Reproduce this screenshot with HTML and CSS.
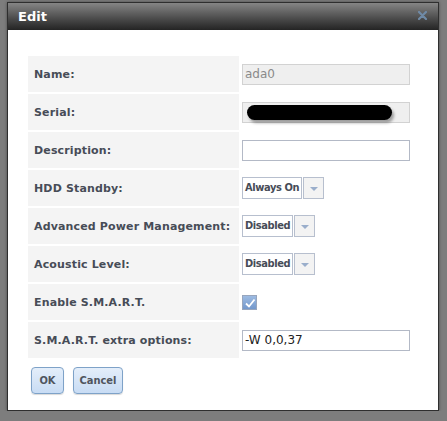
FILE: index.html
```html
<!DOCTYPE html>
<html>
<head lang="en">
    <meta charset="UTF-8">
    <title>Edit</title>
    <link rel="stylesheet" href="styles.css">
</head>
<body>
<div class="dialog">
    <div class="titlebar">
        <span class="title">Edit</span>
        <span class="close">
            <svg width="9" height="9" viewBox="0 0 9 9">
                <path d="M1 1 L8 8 M8 1 L1 8" stroke="#6f8aa6" stroke-width="2.2" stroke-linecap="round"/>
            </svg>
        </span>
    </div>
    <div class="content">
        <div class="form">
            <div class="label">Name:</div>
            <div class="field"><div class="input readonly">ada0</div></div>

            <div class="label">Serial:</div>
            <div class="field"><div class="input readonly"><span class="blot"></span></div></div>

            <div class="label">Description:</div>
            <div class="field"><div class="input"></div></div>

            <div class="label">HDD Standby:</div>
            <div class="field">
                <div class="select"><span class="sel-text">Always On</span><span class="sel-btn"><i></i></span></div>
            </div>

            <div class="label">Advanced Power Management:</div>
            <div class="field">
                <div class="select"><span class="sel-text">Disabled</span><span class="sel-btn"><i></i></span></div>
            </div>

            <div class="label">Acoustic Level:</div>
            <div class="field">
                <div class="select"><span class="sel-text">Disabled</span><span class="sel-btn"><i></i></span></div>
            </div>

            <div class="label">Enable S.M.A.R.T.</div>
            <div class="field">
                <span class="checkbox">
                    <svg width="12" height="12" viewBox="0 0 12 12">
                        <path d="M2 6.5 L5 9.5 L10.5 2.5" fill="none" stroke="#ffffff" stroke-width="1.8"/>
                    </svg>
                </span>
            </div>

            <div class="label">S.M.A.R.T. extra options:</div>
            <div class="field"><div class="input text">-W 0,0,37</div></div>
        </div>
        <div class="buttons">
            <a class="btn ok" href="javascript:void(0)">OK</a>
            <a class="btn cancel" href="javascript:void(0)">Cancel</a>
        </div>
    </div>
</div>
</body>
</html>
```

FILE: styles.css
```css
body{
    margin: 0;
    background: #7d7d7d;
    font-family: "DejaVu Sans", Verdana, sans-serif;
}
.dialog{
    width: 430px;
    height: 407px;
    margin: 2px 0 0 7px;
    border: 1px solid #2e2e2e;
    background: #fff;
    box-shadow: 0 0 3px rgba(0,0,0,0.4);
}
.titlebar{
    height: 27px;
    background: linear-gradient(#858585, #444 65%, #242424);
    display: flex;
    align-items: center;
    justify-content: space-between;
    padding: 0 11px 0 10px;
}
.title{
    color: #fff;
    font-weight: bold;
    font-size: 13px;
}
.close{
    display: flex;
    margin-top: -2px;
}
.content{
    padding: 26px 0 0 20px;
}
.form{
    display: grid;
    grid-template-columns: 211px 168px;
    column-gap: 3px;
    row-gap: 2px;
}
.label{
    height: 36px;
    background: #f4f4f4;
    color: #474c57;
    font-size: 11px;
    font-weight: bold;
    letter-spacing: 0.15px;
    display: flex;
    align-items: center;
    padding-left: 6px;
}
.field{
    display: flex;
    align-items: center;
}
.input{
    box-sizing: border-box;
    width: 168px;
    height: 21px;
    border: 1px solid #b3b9c6;
    background: #fff;
    font-size: 12px;
    line-height: 19px;
    padding-left: 2px;
    color: #222;
    position: relative;
}
.input.readonly{
    background: #efefef;
    border-color: #d2d2d2;
    color: #8a8a8a;
}
.blot{
    position: absolute;
    left: 4px;
    top: 2px;
    width: 145px;
    height: 15px;
    border-radius: 8px;
    background: #000;
    box-shadow: 2px 3px 3px rgba(0,0,0,0.35);
}
.select{
    display: flex;
    height: 22px;
}
.sel-text{
    box-sizing: border-box;
    height: 22px;
    border: 1px solid #b7bfce;
    padding: 0 2px;
    font-family: "DejaVu Sans Condensed", "DejaVu Sans", sans-serif;
    font-stretch: condensed;
    font-size: 11px;
    font-weight: bold;
    letter-spacing: -0.4px;
    color: #474c57;
    line-height: 20px;
    white-space: nowrap;
}
.sel-btn{
    box-sizing: border-box;
    width: 21px;
    height: 22px;
    margin-left: 1px;
    border: 1px solid #b7bfce;
    background: #f3f3f3;
    display: flex;
    align-items: center;
    justify-content: center;
}
.sel-btn i{
    width: 0;
    height: 0;
    border-left: 4px solid transparent;
    border-right: 4px solid transparent;
    border-top: 4px solid #9aaecb;
    margin-top: 1px;
}
.checkbox{
    box-sizing: border-box;
    width: 15px;
    height: 15px;
    border: 1px solid #98a6bd;
    background: linear-gradient(#9dbbe2, #7398cc);
    display: flex;
    align-items: center;
    justify-content: center;
    margin-top: 1px;
}
.buttons{
    display: flex;
    gap: 9px;
    padding: 9px 0 0 3px;
}
.btn{
    box-sizing: border-box;
    height: 27px;
    border: 1px solid #7ea2c8;
    border-radius: 4px;
    background: linear-gradient(#e4eefa, #c8dcf4);
    box-shadow: 0 1px 1px rgba(0,0,0,0.15);
    color: #50555e;
    font-family: "DejaVu Sans Condensed", "DejaVu Sans", sans-serif;
    font-stretch: condensed;
    font-size: 11px;
    font-weight: bold;
    line-height: 25px;
    text-align: center;
    text-decoration: none;
}
.btn.ok{
    width: 33px;
}
.btn.cancel{
    width: 50px;
}
```
